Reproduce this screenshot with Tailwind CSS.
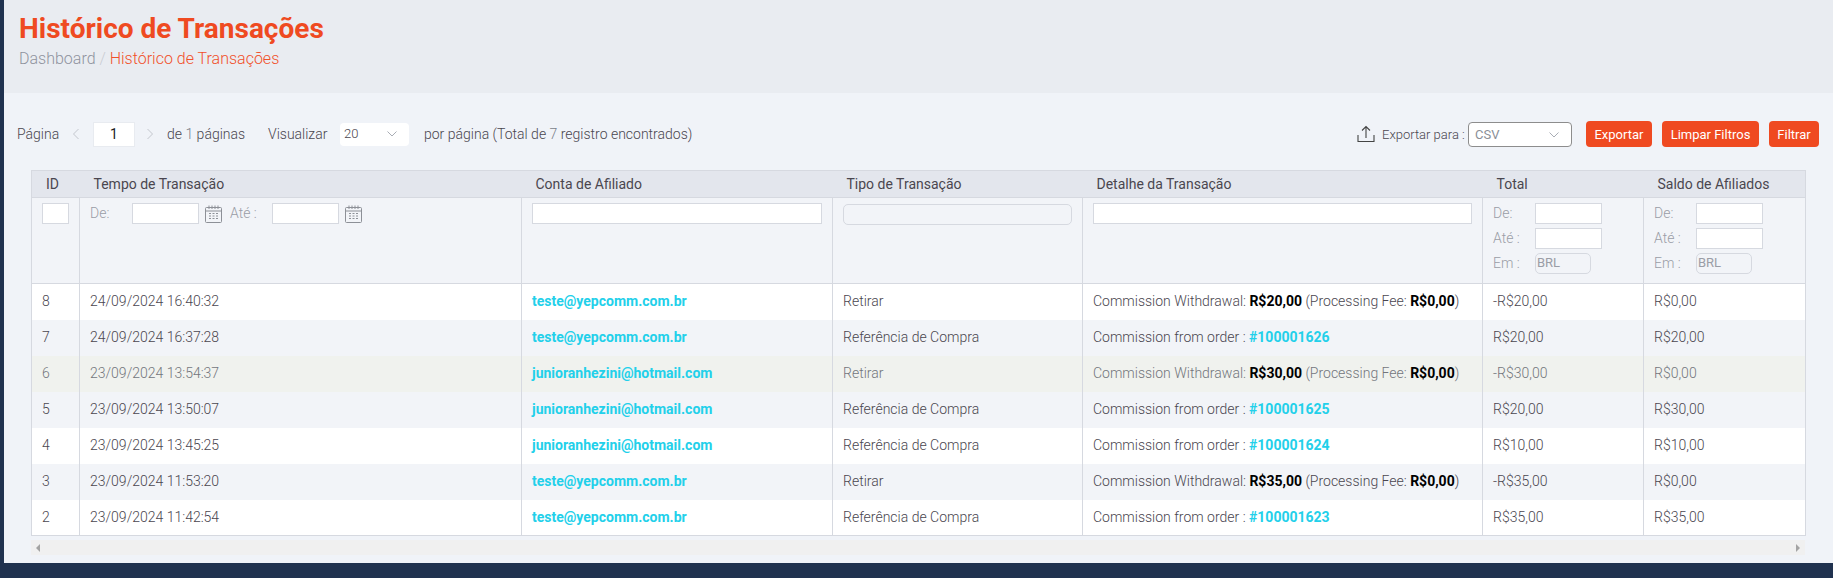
<!doctype html>
<html>
<head>
  <meta charset="UTF-8">
  <script src="https://cdn.jsdelivr.net/npm/@tailwindcss/browser@4"></script>
</head>
<body class="bg-[#20324f] h-[578px] overflow-hidden font-['Roboto',sans-serif] text-[14px] text-[#4a464f]">
  <div class="ml-[4px] h-[563px] bg-[#f0f3f8]">

    <!-- Page title -->
    <div class="h-[93px] bg-[#e9ecf1] pl-[15px] pt-[10px]">
      <h1 class="text-[28px] leading-[37px] font-bold text-[#ef4a21]">Histórico de Transações</h1>
      <div class="text-[16px] font-light leading-[20px] mt-[2px] text-[#8f939e]">Dashboard <span class="text-[#c9ccd3]">/</span> <span class="text-[#f1502a]">Histórico de Transações</span></div>
    </div>

    <!-- Toolbar -->
    <div class="h-[77px] flex items-start justify-between pl-[13px] pr-[14px] pt-[28px]">
      <div class="flex items-center h-[26px] font-light whitespace-nowrap">
        <span class="w-[45px]">Página</span>
        <svg class="ml-[10px]" width="8" height="12" viewBox="0 0 8 12" fill="none" stroke="#c4c7ce"><path d="M6.5 1 1.5 6l5 5"/></svg>
        <div class="ml-[13px] w-[42px] h-[25px] bg-white border border-[#e8ebf0] flex items-center justify-center text-[#222] font-normal">1</div>
        <svg class="ml-[11px]" width="8" height="12" viewBox="0 0 8 12" fill="none" stroke="#c4c7ce"><path d="M1.5 1l5 5-5 5"/></svg>
        <span class="ml-[13px] w-[78px]">de <span class="text-[#7b7f8a]">1</span> páginas</span>
        <span class="ml-[23px] w-[59px]">Visualizar</span>
        <div class="ml-[13px] w-[69px] h-[23px] bg-white rounded-[4px] flex items-center justify-between pl-[4px] pr-[12px] text-[13px] font-light">
          <span>20</span>
          <svg width="10" height="6" viewBox="0 0 10 6" fill="none" stroke="#a9adb5"><path d="M.5.5 5 5 9.5.5"/></svg>
        </div>
        <span class="ml-[15px]">por página (Total de <span class="text-[#7b7f8a]">7</span> registro encontrados)</span>
      </div>
      <div class="flex items-center h-[26px]">
        <svg width="18" height="18" viewBox="0 0 18 18" fill="none" stroke="#444" stroke-width="1.1"><path d="M1 10v6.500h16V10M9 13V1.500M5 5.500l4-4 4 4"/></svg>
        <span class="ml-[7px] w-[86px] pt-[2px] text-[13px] font-light whitespace-nowrap">Exportar para :</span>
        <div class="w-[104px] h-[25px] bg-white border border-[#8d8d8d] rounded-[4px] flex items-center justify-between pl-[6px] pr-[12px] pt-[2px] text-[13px] text-[#8b8f97]">
          <span>CSV</span>
          <svg width="10" height="6" viewBox="0 0 10 6" fill="none" stroke="#a9adb5"><path d="M.5.5 5 5 9.5.5"/></svg>
        </div>
        <button class="ml-[14px] h-[26px] w-[66px] pt-[2px] bg-[#ef4a21] text-white text-[13px] rounded-[4px]">Exportar</button>
        <button class="ml-[10px] h-[26px] w-[97px] pt-[2px] bg-[#ef4a21] text-white text-[13px] rounded-[4px]">Limpar Filtros</button>
        <button class="ml-[10px] h-[26px] w-[50px] pt-[2px] bg-[#ef4a21] text-white text-[13px] rounded-[4px]">Filtrar</button>
      </div>
    </div>

    <!-- Grid -->
    <div class="ml-[27px] w-[1774px]">
      <table class="table-fixed w-full border-collapse border border-[#d6d9e0]">
        <colgroup>
          <col class="w-[48px]"><col class="w-[442px]"><col class="w-[311px]"><col class="w-[250px]"><col class="w-[400px]"><col class="w-[161px]"><col class="w-[162px]">
        </colgroup>
        <thead>
          <tr class="h-[27px] bg-[#e3e6ed]">
            <th class="font-normal text-left pl-[14px] border-b border-[#d6d9e0]">ID</th>
            <th class="font-normal text-left pl-[14px] border-b border-[#d6d9e0]">Tempo de Transação</th>
            <th class="font-normal text-left pl-[14px] border-b border-[#d6d9e0]">Conta de Afiliado</th>
            <th class="font-normal text-left pl-[14px] border-b border-[#d6d9e0]">Tipo de Transação</th>
            <th class="font-normal text-left pl-[14px] border-b border-[#d6d9e0]">Detalhe da Transação</th>
            <th class="font-normal text-left pl-[14px] border-b border-[#d6d9e0]">Total</th>
            <th class="font-normal text-left pl-[14px] border-b border-[#d6d9e0]">Saldo de Afiliados</th>
          </tr>
          <tr class="h-[86px] bg-[#f2f4f8] text-[#9a9da6] font-light align-top">
            <td class="border border-[#d6d9e0] pt-[5px] pl-[10px]"><div class="w-[27px] h-[21px] bg-white border border-[#d6d9e0]"></div></td>
            <td class="border border-[#d6d9e0] pt-[5px] pl-[10px]">
              <div class="flex items-center h-[21px]">
                <span class="w-[42px]">De:</span>
                <div class="w-[67px] h-[21px] bg-white border border-[#d6d9e0]"></div>
                <svg class="ml-[6px]" width="17" height="18" viewBox="0 0 17 18" fill="none" stroke="#8d9097"><rect x=".5" y="2.500" width="16" height="15" rx="1"/><path d="M.5 6h16M4 .5V4M7 .5V4M10 .5V4M13 .5V4"/><path d="M4 8.500h9M4 11h9M4 13.500h9" stroke-dasharray="2 1.500"/></svg>
                <span class="ml-[8px] w-[42px]">Até :</span>
                <div class="w-[67px] h-[21px] bg-white border border-[#d6d9e0]"></div>
                <svg class="ml-[6px]" width="17" height="18" viewBox="0 0 17 18" fill="none" stroke="#8d9097"><rect x=".5" y="2.500" width="16" height="15" rx="1"/><path d="M.5 6h16M4 .5V4M7 .5V4M10 .5V4M13 .5V4"/><path d="M4 8.500h9M4 11h9M4 13.500h9" stroke-dasharray="2 1.500"/></svg>
              </div>
            </td>
            <td class="border border-[#d6d9e0] pt-[5px] px-[10px]"><div class="w-[290px] h-[21px] bg-white border border-[#d6d9e0]"></div></td>
            <td class="border border-[#d6d9e0] pt-[6px] px-[10px]"><div class="w-[229px] h-[21px] bg-[#f2f4f8] border border-[#d6d9e0] rounded-[5px]"></div></td>
            <td class="border border-[#d6d9e0] pt-[5px] px-[10px]"><div class="w-[379px] h-[21px] bg-white border border-[#d6d9e0]"></div></td>
            <td class="border border-[#d6d9e0] pt-[5px] pl-[10px]">
              <div class="flex items-center h-[21px]"><span class="w-[42px]">De:</span><div class="w-[67px] h-[21px] bg-white border border-[#d6d9e0]"></div></div>
              <div class="flex items-center h-[21px] mt-[4px]"><span class="w-[42px]">Até :</span><div class="w-[67px] h-[21px] bg-white border border-[#d6d9e0]"></div></div>
              <div class="flex items-center h-[21px] mt-[4px]"><span class="w-[42px]">Em :</span><div class="w-[56px] h-[21px] border border-[#d6d9e0] rounded-[5px] text-[13px] font-normal leading-[17px] pl-[1px]">BRL</div></div>
            </td>
            <td class="border border-[#d6d9e0] pt-[5px] pl-[10px]">
              <div class="flex items-center h-[21px]"><span class="w-[42px]">De:</span><div class="w-[67px] h-[21px] bg-white border border-[#d6d9e0]"></div></div>
              <div class="flex items-center h-[21px] mt-[4px]"><span class="w-[42px]">Até :</span><div class="w-[67px] h-[21px] bg-white border border-[#d6d9e0]"></div></div>
              <div class="flex items-center h-[21px] mt-[4px]"><span class="w-[42px]">Em :</span><div class="w-[56px] h-[21px] border border-[#d6d9e0] rounded-[5px] text-[13px] font-normal leading-[17px] pl-[1px]">BRL</div></div>
            </td>
          </tr>
        </thead>
        <tbody id="rows"></tbody>
      </table>
      <!-- Horizontal scrollbar -->
      <div class="mt-[4px] h-[15px] bg-[#f0f0f0] flex items-center justify-between px-[5px]">
        <svg width="4" height="8" viewBox="0 0 4 8" fill="#a3a3a3"><path d="M4 0v8L0 4z"/></svg>
        <svg width="4" height="8" viewBox="0 0 4 8" fill="#a3a3a3"><path d="M0 0v8l4-4z"/></svg>
      </div>
    </div>
  </div>

  <script>
    const link = 'font-bold text-[#22d0ea]';
    const b = 'font-bold text-black';
    const rows = [
      [8, '24/09/2024 16:40:32', 'teste@yepcomm.com.br', 'Retirar', 'w', 'R$20,00', '-R$20,00', 'R$0,00', 'bg-white', ''],
      [7, '24/09/2024 16:37:28', 'teste@yepcomm.com.br', 'Referência de Compra', '#100001626', '', 'R$20,00', 'R$20,00', 'bg-[#f2f4f8]', ''],
      [6, '23/09/2024 13:54:37', 'junioranhezini@hotmail.com', 'Retirar', 'w', 'R$30,00', '-R$30,00', 'R$0,00', 'bg-[#f0f2ee]', 'text-[#73767c]'],
      [5, '23/09/2024 13:50:07', 'junioranhezini@hotmail.com', 'Referência de Compra', '#100001625', '', 'R$20,00', 'R$30,00', 'bg-[#f2f4f8]', ''],
      [4, '23/09/2024 13:45:25', 'junioranhezini@hotmail.com', 'Referência de Compra', '#100001624', '', 'R$10,00', 'R$10,00', 'bg-white', ''],
      [3, '23/09/2024 11:53:20', 'teste@yepcomm.com.br', 'Retirar', 'w', 'R$35,00', '-R$35,00', 'R$0,00', 'bg-[#f2f4f8]', ''],
      [2, '23/09/2024 11:42:54', 'teste@yepcomm.com.br', 'Referência de Compra', '#100001623', '', 'R$35,00', 'R$35,00', 'bg-white', ''],
    ];
    const td = 'border-x border-[#d6d9e0] pl-[10px]';
    document.getElementById('rows').innerHTML = rows.map(r => {
      const detail = r[4] === 'w'
        ? `Commission Withdrawal: <span class="${b}">${r[5]}</span> (Processing Fee: <span class="${b}">R$0,00</span>)`
        : `Commission from order : <span class="${link}">${r[4]}</span>`;
      return `
        <tr class="h-[36px] ${r[8]} ${r[9]}">
          <td class="${td} font-light">${r[0]}</td>
          <td class="${td} font-light">${r[1]}</td>
          <td class="${td} ${link}">${r[2]}</td>
          <td class="${td} font-light">${r[3]}</td>
          <td class="${td} font-light">${detail}</td>
          <td class="${td} font-light">${r[6]}</td>
          <td class="${td} font-light">${r[7]}</td>
        </tr>`;
    }).join('');
  </script>
</body>
</html>
